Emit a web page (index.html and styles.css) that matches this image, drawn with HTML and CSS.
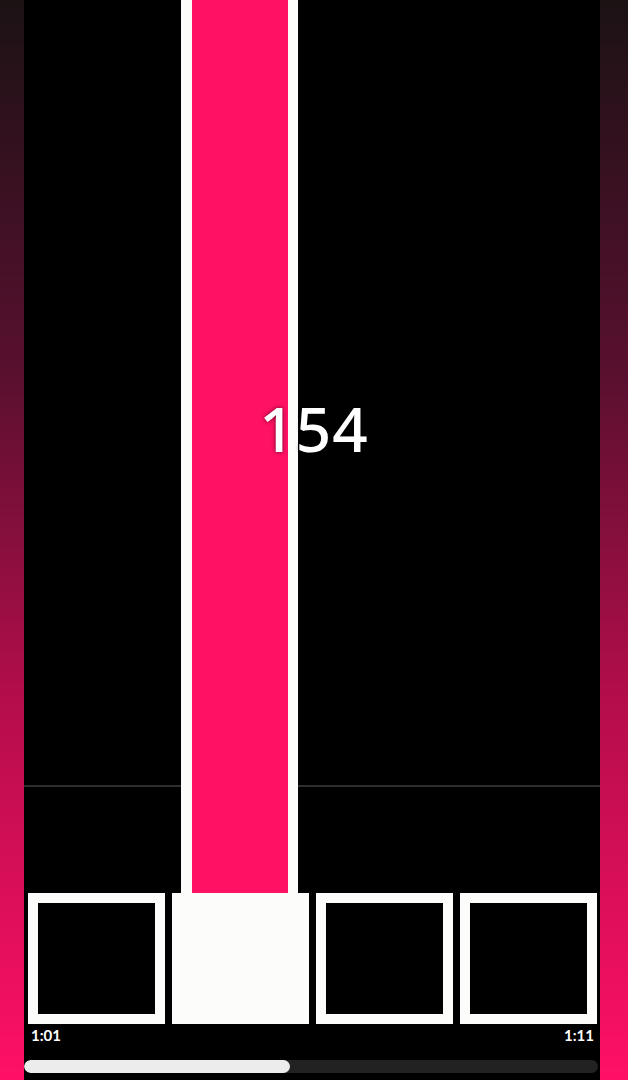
FILE: index.html
```html
<!DOCTYPE html>
<html lang="en">
<head>
  <meta charset="UTF-8">
  <meta name="viewport" content="width=device-width, initial-scale=1.0">
  <title>Piano Tiles</title>
  <link rel="stylesheet" href="styles.css">
</head>
<body>
  <div id="game">
    <div class="side side-left"></div>

    <div id="stage">
      <!-- Zona donde caen las notas -->
      <div id="field">
        <div class="hit-line"></div>
        <div class="note"></div>
        <div id="score">154</div>
      </div>

      <!-- Teclas -->
      <div id="keys">
        <div class="key"></div>
        <div class="key pressed"></div>
        <div class="key"></div>
        <div class="key"></div>
      </div>

      <div id="times">
        <span>1:01</span>
        <span>1:11</span>
      </div>

      <div id="progress">
        <div class="progress-fill"></div>
      </div>
    </div>

    <div class="side side-right"></div>
  </div>
</body>
</html>
```

FILE: styles.css
```css
/* Estilos generales */
body {
  margin: 0;
  padding: 0;
  background: #000;
  font-family: 'Lato', 'DejaVu Sans', sans-serif;
  color: white;
}

#game {
  display: flex;
  width: 628px;
  height: 1080px;
  overflow: hidden;
}

/* Barras laterales con degradado */
.side {
  background: linear-gradient(to bottom, #1b1214 0%, #5a1030 35%, #b50d4c 65%, #ff1066 100%);
}

.side-left {
  width: 24px;
}

.side-right {
  width: 28px;
}

#stage {
  flex: 1;
  display: flex;
  flex-direction: column;
  background: #000;
}

/* Zona de juego */
#field {
  position: relative;
  height: 893px;
}

.hit-line {
  position: absolute;
  left: 0;
  right: 0;
  top: 785px;
  height: 2px;
  background: #2e2e2e;
}

.note {
  position: absolute;
  top: 0;
  bottom: 0;
  left: 157px;
  width: 96px;
  background: #ff1164;
  border-left: 11px solid #fcfcfa;
  border-right: 10px solid #fcfcfa;
}

#score {
  position: absolute;
  left: 0;
  right: 0;
  top: 388px;
  text-align: center;
  font-family: 'Noto Sans', 'Open Sans', sans-serif;
  font-size: 62px;
  font-weight: 500;
  line-height: 80px;
  letter-spacing: 1px;
  padding-left: 4px;
  text-shadow: 0 0 4px rgba(0, 0, 0, 0.6);
}

/* Teclas */
#keys {
  display: flex;
  gap: 7px;
  padding: 0 3px 0 4px;
  height: 131px;
}

.key {
  flex: 1;
  border: 10px solid #fcfcfa;
  background: #000;
}

.key.pressed {
  background: #fcfcfa;
}

#times {
  display: flex;
  justify-content: space-between;
  padding: 2px 6px 0 7px;
  height: 20px;
  font-size: 15px;
  font-weight: bold;
  line-height: 18px;
}

#progress {
  margin: 14px 2px 0 0;
  height: 13px;
  border-radius: 7px;
  background: #222;
  overflow: hidden;
}

.progress-fill {
  width: 266px;
  height: 100%;
  border-radius: 7px;
  background: #ececec;
}
```
